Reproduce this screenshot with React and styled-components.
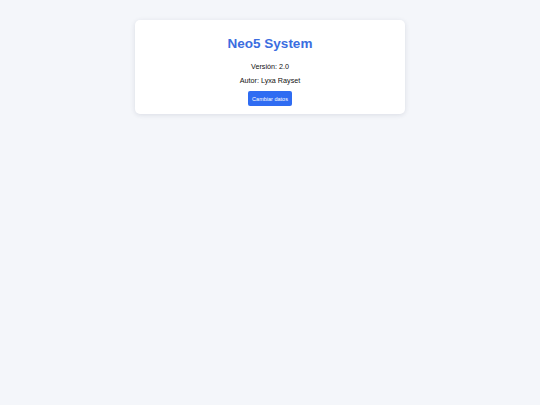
import React from 'react';
import styled, {createGlobalStyle} from 'styled-components';

const GlobalStyle = createGlobalStyle`
  html, body {
    margin: 0;
    padding: 0;
    background-color: #f4f6fa;
    font-family: "Liberation Sans", Arial, sans-serif;
  }
`

const Page = styled.div`
  width: 540px;
  min-height: 405px;
  display: flex;
  justify-content: center;
  align-items: flex-start;
  padding-top: 20px;
  box-sizing: border-box;
`

const Card = styled.div`
  width: 270px;
  box-sizing: border-box;
  padding: 16px 10px 8px;
  background-color: #ffffff;
  border-radius: 5px;
  box-shadow: 0 1px 5px rgba(30, 40, 70, 0.12);
  display: flex;
  flex-direction: column;
  align-items: center;
`

const Title = styled.h1`
  margin: 0 0 12px;
  font-size: 13.5px;
  font-weight: bold;
  color: #3b6de0;
`

const Info = styled.p`
  margin: 0 0 6px;
  font-size: 7.2px;
  line-height: 8px;
  color: #111111;
`

const Button = styled.button`
  margin-top: 0;
  height: 15px;
  padding: 0 4px;
  border: none;
  border-radius: 2px;
  background-color: #2f6cf2;
  color: #ffffff;
  font-family: "Liberation Sans", Arial, sans-serif;
  font-size: 5.5px;
  cursor: pointer;
`

const App = () => (
  <>
    <GlobalStyle />
    <Page>
      <Card>
        <Title>Neo5 System</Title>
        <Info>Versión: 2.0</Info>
        <Info>Autor: Lyxa Rayset</Info>
        <Button>Cambiar datos</Button>
      </Card>
    </Page>
  </>
)

export default App
